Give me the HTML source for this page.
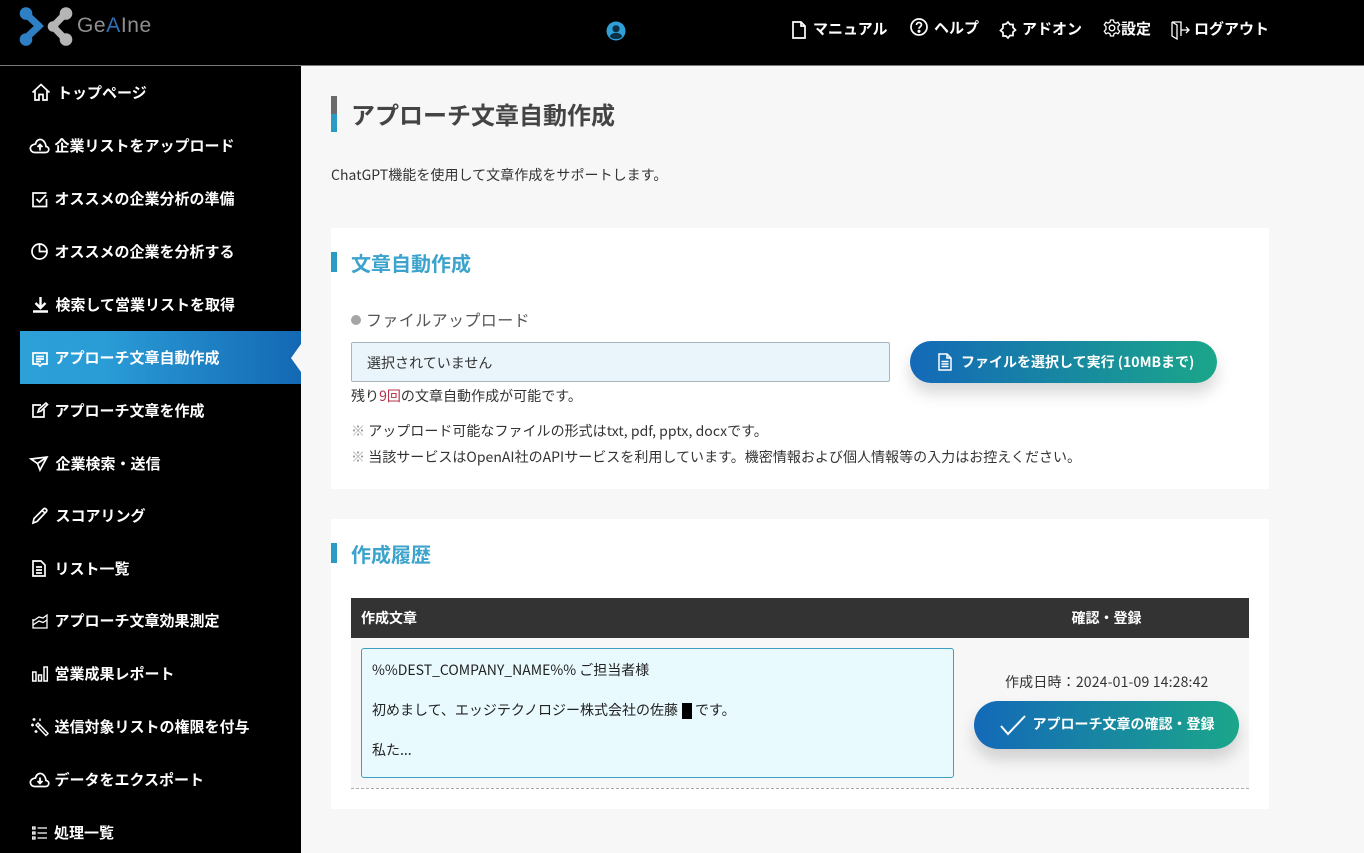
<!DOCTYPE html>
<html lang="ja"><head><meta charset="utf-8"><title>アプローチ文章自動作成</title>
<style>
*{box-sizing:border-box}
html,body{margin:0;padding:0;width:1364px;height:853px;overflow:hidden;background:#f7f7f7}
body{position:relative;font-family:"Noto Sans CJK JP","Liberation Sans",sans-serif;color:#333}
.a{position:absolute}
.t{position:absolute;white-space:nowrap;line-height:20px}
.m{color:#fff;font-weight:700;font-size:15px;left:55px;margin-top:1px;margin-left:-.5px}
.h{color:#fff;font-weight:700;font-size:15px;top:19px}
svg.i{position:absolute;fill:none;stroke:#fff;stroke-width:1.700;overflow:visible}
.b{font-size:14px;color:#333;letter-spacing:.03px}
</style></head><body>
<div class="a" style="left:0;top:0;width:1364px;height:65px;background:#000"></div>
<div class="a" style="left:0;top:65px;width:1364px;height:1px;background:#777"></div>
<div class="a" style="left:0;top:66px;width:301px;height:787px;background:#000"></div>

<!-- logo -->
<svg class="a" style="left:0;top:0" width="76" height="52" viewBox="0 0 76 52">
<g fill="#2f7fc4" stroke="#2f7fc4" stroke-linecap="round" stroke-linejoin="round">
<path d="M25 13L39 26L25 39" fill="none" stroke-width="7"/>
<circle cx="26" cy="13.500" r="6.300" stroke="none"/><circle cx="26" cy="39.500" r="6.300" stroke="none"/>
<path d="M31 17L43 26L31 35L35 26Z" stroke-width="1.500"/></g>
<g fill="#b5b5b5" stroke="#b5b5b5" stroke-linecap="round" stroke-linejoin="round">
<path d="M66 13L53 26.500L66 40" fill="none" stroke-width="7"/>
<circle cx="66" cy="13.500" r="6.300" stroke="none"/><circle cx="66" cy="39.500" r="6.300" stroke="none"/>
<circle cx="53" cy="26.500" r="5.300" stroke="none"/></g>
</svg>
<div class="t" style="left:77px;top:13px;font-family:'Liberation Sans',sans-serif;font-size:21px;line-height:26px;color:#8f8f8f;font-weight:400;letter-spacing:.6px">Ge<span style="color:#2f6fb5">A</span>Ine</div>

<!-- header -->
<svg class="a" style="left:606px;top:21px" width="20" height="20" viewBox="0 0 20 20"><circle cx="10" cy="10" r="9.500" fill="#2f9fd8"/><circle cx="10" cy="7.800" r="3.600" fill="#0d2f45"/><path d="M3.800 15.500C5 12.600 7 12 10 12s5 .6 6.200 3.500C14.700 17.500 12.500 18 10 18s-4.700-.5-6.200-2.500Z" fill="#0d2f45"/></svg>

<svg class="i" style="left:792px;top:21px" width="14" height="18" viewBox="0 0 14 18"><path d="M1 1H9L13 5V17H1ZM9 1V5H13"/></svg>
<div class="t h" style="left:813px">マニュアル</div>
<svg class="i" style="left:910px;top:18px" width="18" height="18" viewBox="0 0 18 18"><circle cx="9" cy="9" r="8"/><path d="M6.500 7C6.500 5.300 7.700 4.500 9 4.500S11.500 5.400 11.500 6.800C11.500 8.600 9 8.800 9 10.800"/><circle cx="9" cy="13.300" r=".7" fill="#fff"/></svg>
<div class="t h" style="left:934px;top:18px">ヘルプ</div>
<svg class="i" style="left:999px;top:21px" width="18" height="18" viewBox="0 0 18 18"><path d="M7 3L9 1L11 3.500L14 3.500V6.500L16.500 9L14 11V14.500H11L9 17L7 15H4V11.500L1.500 9.500L4 7V3.500Z"/></svg>
<div class="t h" style="left:1022px">アドオン</div>
<svg class="i" style="left:1103px;top:19px;stroke-width:1.300" width="18" height="18" viewBox="0 0 18 18"><circle cx="9" cy="9" r="2.800"/><path d="M7.500 1H10.500L11 3.200L13 4.200L15 3.200L16.700 5.800L15 7.500V10.500L16.700 12.200L15 14.800L13 13.800L11 14.800L10.500 17H7.500L7 14.800L5 13.800L3 14.800L1.300 12.200L3 10.500V7.500L1.300 5.800L3 3.200L5 4.200L7 3.200Z"/></svg>
<div class="t h" style="left:1121px;top:19px">設定</div>
<svg class="i" style="left:1171px;top:21px;stroke-width:1.300" width="20" height="19" viewBox="0 0 20 19"><path d="M1 1H10V15M1 1V15L6 18V4L1 1M10 9H18M15 6L18 9L15 12"/></svg>
<div class="t h" style="left:1194px">ログアウト</div>

<!-- active -->
<div class="a" style="left:20px;top:331px;width:281px;height:53px;background:linear-gradient(90deg,#2ea0d8 0%,#2a9cd6 30%,#1468b4 100%)"></div>
<div class="a" style="left:291px;top:344px;width:0;height:0;border-top:14px solid transparent;border-bottom:14px solid transparent;border-right:10px solid #f7f7f7"></div>

<!-- menu -->
<svg class="i" style="left:32px;top:83px" width="18" height="18" viewBox="0 0 18 18"><path d="M.5 9.500L9 1.500L17.500 9.500M3 7.500V17H7V11.500H11V17H15V7.500"/></svg>
<div class="t m" style="left:57.500px;top:82px">トップページ</div>
<svg class="i" style="left:30px;top:138px" width="20" height="16" viewBox="0 0 20 16"><path d="M5 14.500H15.500C19.500 14.500 20 9 16 8.500C15.500 4 12.500 1 9.500 1.500C7 2 6 4 5.500 6C2 6.500-1 9 1 12.500C2 14 3.500 14.500 5 14.500Z"/><path d="M10 12.500V6.500M7.500 9L10 6.500L12.500 9" stroke-width="1.800"/></svg>
<div class="t m" style="top:135px">企業リストをアップロード</div>
<svg class="i" style="left:32px;top:192px" width="16" height="16" viewBox="0 0 16 16"><path d="M14.500 7V14.500H1V1H14.500M4.500 7L7.500 10L14 3"/></svg>
<div class="t m" style="top:188px">オススメの企業分析の準備</div>
<svg class="i" style="left:31px;top:243px" width="17" height="17" viewBox="0 0 17 17"><circle cx="8.500" cy="8.500" r="7.500"/><path d="M8.500 1V8.500H16"/></svg>
<div class="t m" style="top:241px">オススメの企業を分析する</div>
<svg class="i" style="left:33px;top:296px;stroke-width:2.400" width="15" height="17" viewBox="0 0 15 17"><path d="M7.500 1V11M2.500 7L7.500 12L12.500 7M0 15.500H15"/></svg>
<div class="t m" style="left:56px;top:294px">検索して営業リストを取得</div>
<svg class="i" style="left:32px;top:352px" width="16" height="15" viewBox="0 0 16 15"><path d="M1 1H15V12H10L8 14L6 12H1ZM4 4.500H12M4 7H12M4 9.500H9"/></svg>
<div class="t m" style="top:347px">アプローチ文章自動作成</div>
<svg class="i" style="left:32px;top:402px" width="16" height="16" viewBox="0 0 16 16"><path d="M9 3H1V15H12V7M6 10L7 7L14 1L15.500 2.500L9 9Z"/></svg>
<div class="t m" style="top:400px">アプローチ文章を作成</div>
<svg class="i" style="left:30px;top:456px" width="18" height="15" viewBox="0 0 18 15"><path d="M1 3L17 1L10 14L7.500 7.500ZM7.500 7.500L17 1"/></svg>
<div class="t m" style="left:56px;top:453px">企業検索・送信</div>
<svg class="i" style="left:32px;top:507px" width="16" height="17" viewBox="0 0 16 17"><path d="M1 16L2 11.500L11.500 2C13 .5 15.500 2.500 14.500 4.500L5 14.500ZM10 3.500L13 6"/></svg>
<div class="t m" style="left:56px;top:505px">スコアリング</div>
<svg class="i" style="left:32px;top:560px" width="14" height="17" viewBox="0 0 14 17"><path d="M1 1H9L13 5V16H1ZM4 7H10M4 10H10M4 13H10"/></svg>
<div class="t m" style="top:558px">リスト一覧</div>
<svg class="i" style="left:32px;top:614px;stroke-width:1.300" width="16" height="15" viewBox="0 0 16 15"><path d="M1 5V14H15V1L11 4L7 3L1 7M1 11L7 7L11 8.500L15 6"/></svg>
<div class="t m" style="top:610px">アプローチ文章効果測定</div>
<svg class="i" style="left:32px;top:666px;stroke-width:1.500" width="16" height="16" viewBox="0 0 16 16"><path d="M.700 6H4V15H.700ZM6.500 9H9.500V15H6.500ZM12 1H15.300V15H12Z"/></svg>
<div class="t m" style="top:663px">営業成果レポート</div>
<svg class="i" style="left:30px;top:717px;stroke-width:1.400" width="18" height="18" viewBox="0 0 18 18"><path d="M8 6L18 16.500L16 18.500L6 8ZM8.500 9.500L10.500 7.500M4 1V4M2.500 2.500H5.500M1 8H4M2.500 6.500V9.500M6 13V16M4.500 14.500H7.500M10 1.500V4"/></svg>
<div class="t m" style="top:716px">送信対象リストの権限を付与</div>
<svg class="i" style="left:30px;top:772px" width="20" height="16" viewBox="0 0 20 16"><path d="M5 14.500H15.500C19.500 14.500 20 9 16 8.500C15.500 4 12.500 1 9.500 1.500C7 2 6 4 5.500 6C2 6.500-1 9 1 12.500C2 14 3.500 14.500 5 14.500Z"/><path d="M10 5.500V11.500M7.500 9L10 11.500L12.500 9" stroke-width="1.800"/></svg>
<div class="t m" style="top:769px">データをエクスポート</div>
<svg class="i" style="left:32px;top:826px;stroke-width:1.300" width="15" height="14" viewBox="0 0 15 14"><path d="M.700 1H3V3H.700ZM.700 6H3V8H.700ZM.700 11H3V13H.700ZM5.500 2H15M5.500 7H15M5.500 12H15"/></svg>
<div class="t m" style="left:54.500px;top:822px">処理一覧</div>

<!-- main -->
<div class="a" style="left:331px;top:96px;width:6px;height:18px;background:#6b6b6b"></div>
<div class="a" style="left:331px;top:114px;width:6px;height:18px;background:#2a9cc4"></div>
<div class="t" style="left:351px;top:97px;font-size:24px;line-height:34px;font-weight:700;color:#444">アプローチ文章自動作成</div>
<div class="t b" style="left:331px;top:165px;letter-spacing:.05px">ChatGPT機能を使用して文章作成をサポートします。</div>

<div class="a" style="left:331px;top:228px;width:938px;height:261px;background:#fff"></div>
<div class="a" style="left:331px;top:252px;width:6px;height:20px;background:#2a9cc4"></div>
<div class="t" style="left:351px;top:248px;font-size:20px;line-height:29px;font-weight:700;color:#3ba3cc">文章自動作成</div>
<div class="a" style="left:351px;top:315px;width:10px;height:10px;border-radius:50%;background:#a5a5a5"></div>
<div class="t" style="left:366px;top:307px;font-size:16px;line-height:24px;color:#555;letter-spacing:.4px">ファイルアップロード</div>
<div class="a" style="left:351px;top:342px;width:539px;height:40px;background:#e9f5fb;border:1px solid #a9b4bb;border-radius:2px"></div>
<div class="t b" style="left:367px;top:353px">選択されていません</div>
<div class="t b" style="left:351px;top:386px">残り<span style="color:#b8314a">9回</span>の文章自動作成が可能です。</div>
<div class="a" style="left:910px;top:341px;width:307px;height:42px;border-radius:21px;background:linear-gradient(90deg,#1469b8,#1ba68a);box-shadow:0 10px 16px rgba(0,0,0,.16)"></div>
<svg class="i" style="left:938px;top:353px;stroke-width:1.500" width="14" height="18" viewBox="0 0 14 18"><path d="M1 1H9L13 5V17H1ZM9 1V5H13M3.500 8.500H10.500M3.500 11H10.500M3.500 13.500H10.500"/></svg>
<div class="t" style="left:961px;top:352px;color:#fff;font-weight:700;font-size:14px">ファイルを選択して実行 (10MBまで)</div>
<div class="t b" style="left:351px;top:421px"><span style="color:#999">※</span> アップロード可能なファイルの形式はtxt, pdf, pptx, docxです。</div>
<div class="t b" style="left:351px;top:447px"><span style="color:#999">※</span> 当該サービスはOpenAI社のAPIサービスを利用しています。機密情報および個人情報等の入力はお控えください。</div>

<div class="a" style="left:331px;top:519px;width:938px;height:290px;background:#fff"></div>
<div class="a" style="left:331px;top:543px;width:6px;height:20px;background:#2a9cc4"></div>
<div class="t" style="left:351px;top:539px;font-size:20px;line-height:29px;font-weight:700;color:#3ba3cc">作成履歴</div>
<div class="a" style="left:351px;top:598px;width:898px;height:40px;background:#333"></div>
<div class="t" style="left:361px;top:608px;color:#fff;font-weight:700;font-size:14px">作成文章</div>
<div class="t" style="left:1071.500px;top:608px;color:#fff;font-weight:700;font-size:14px">確認・登録</div>
<div class="a" style="left:351px;top:638px;width:898px;height:150px;background:#f7f7f7"></div>
<div class="a" style="left:351px;top:788px;width:898px;border-top:1px dashed #aaa"></div>
<div class="a" style="left:361px;top:648px;width:593px;height:130px;background:#e9faff;border:1px solid #3d9fc2;border-radius:3px"></div>
<div class="t" style="left:372px;top:660px;font-size:14px;color:#222">%%DEST_COMPANY_NAME%% ご担当者様</div>
<div class="t" style="left:372px;top:700px;font-size:14px;color:#222">初めまして、エッジテクノロジー株式会社の佐藤</div>
<div class="a" style="left:682px;top:703px;width:10px;height:16px;background:#000"></div>
<div class="t" style="left:695px;top:700px;font-size:14px;color:#222">です。</div>
<div class="t" style="left:372px;top:740px;font-size:14px;color:#222">私た...</div>
<div class="t b" style="left:1005px;top:672px;letter-spacing:.17px">作成日時：2024-01-09 14:28:42</div>
<div class="a" style="left:974px;top:701px;width:265px;height:48px;border-radius:24px;background:linear-gradient(90deg,#1469b8,#1ba68a);box-shadow:0 10px 16px rgba(0,0,0,.16)"></div>
<svg class="i" style="left:1000px;top:715px;stroke-width:2" width="26" height="20" viewBox="0 0 26 20"><path d="M1 11L8 19L25 1"/></svg>
<div class="t" style="left:1032.500px;top:714px;color:#fff;font-weight:700;font-size:14px">アプローチ文章の確認・登録</div>
</body></html>
